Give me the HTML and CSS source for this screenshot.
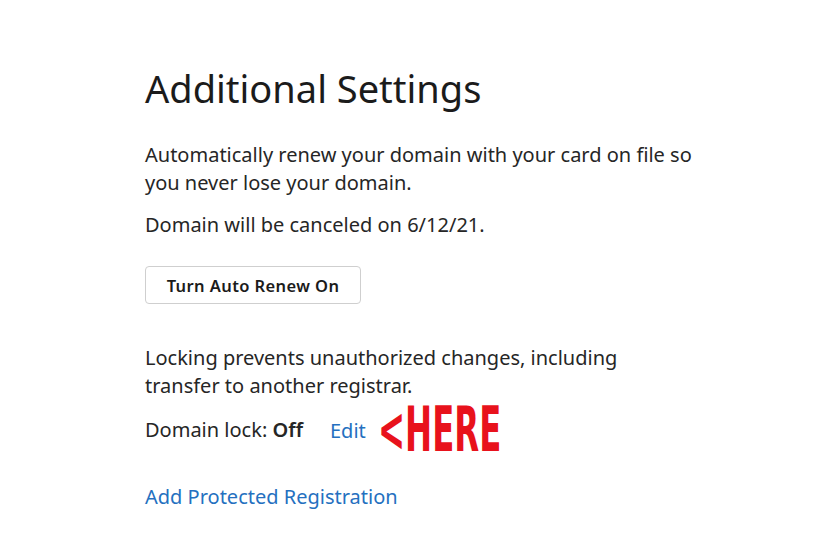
FILE: index.html
```html
<!DOCTYPE html>
<html lang="en">
<head>
    <meta charset="UTF-8">
    <title>Additional Settings</title>
    <link rel="stylesheet" href="styles.css">
</head>
<body>
    <div class="settings">
        <h1 class="title">Additional Settings</h1>

        <p class="text">Automatically renew your domain with your card on file so you never lose your domain.</p>
        <p class="text note">Domain will be canceled on 6/12/21.</p>
        <button class="btn">Turn Auto Renew On</button>

        <p class="text lock-desc">Locking prevents unauthorized changes, including transfer to another registrar.</p>
        <div class="lock-row">
            <span class="text">Domain lock: <b>Off</b></span>
            <a class="link edit" href="#">Edit</a>
            <span class="here">&lt;HERE</span>
        </div>

        <a class="link protect" href="#">Add Protected Registration</a>
    </div>
</body>
</html>
```

FILE: styles.css
```css
* {
    box-sizing: border-box;
    margin: 0;
    padding: 0;
}

body {
    background: #fff;
    font-family: "Noto Sans", "Open Sans", sans-serif;
    color: #1b1b1b;
}

.settings {
    width: 700px;
    padding: 62px 0 0 145px;
    display: flex;
    flex-direction: column;
    align-items: flex-start;
}

.title {
    font-size: 38px;
    font-weight: 400;
    line-height: 52px;
    margin-bottom: 27px;
}

.text {
    font-size: 20px;
    line-height: 28px;
    color: #262626;
    width: 553px;
}

.note {
    margin-top: 14px;
}

.btn {
    margin-top: 27px;
    height: 38px;
    width: 216px;
    background: #fff;
    border: 1px solid #cfcfcf;
    border-radius: 4px;
    font-family: inherit;
    font-size: 16.5px;
    letter-spacing: 0.4px;
    font-weight: 600;
    color: #1b1b1b;
}

.lock-desc {
    margin-top: 40px;
    width: 500px;
}

.lock-row {
    margin-top: 10px;
    display: flex;
    align-items: center;
    height: 40px;
}

.lock-row .text {
    width: auto;
}

.lock-row b {
    font-weight: 600;
}

.link {
    color: #2470c0;
    text-decoration: none;
    font-size: 20px;
}

.edit {
    margin-left: 27px;
}

.here {
    margin-left: 12px;
    font-family: "Liberation Sans Narrow", "DejaVu Sans Condensed", sans-serif;
    font-weight: 700;
    font-size: 62px;
    line-height: 40px;
    color: #e8121c;
    transform: scaleX(0.58);
    transform-origin: left center;
}

.protect {
    margin-top: 33px;
}
```
